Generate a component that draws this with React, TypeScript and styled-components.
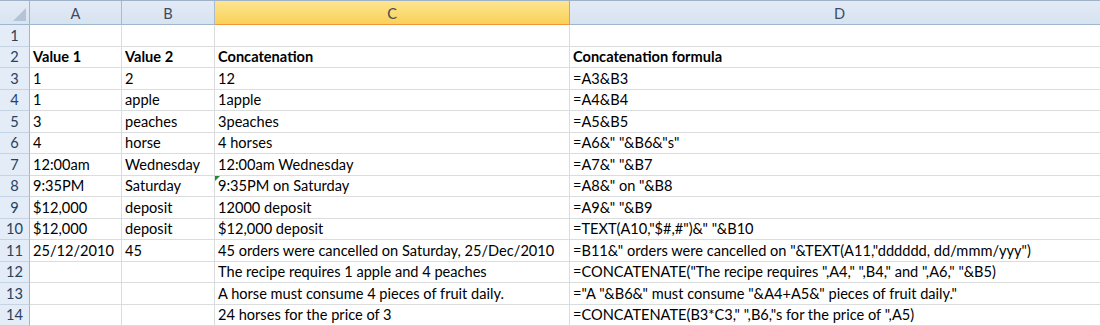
import React from "react";
import styled, { createGlobalStyle } from "styled-components";

const Global = createGlobalStyle`
  html, body { margin: 0; padding: 0; background: #ffffff; overflow: hidden; }
  #root { width: 1100px; height: 326px; overflow: hidden; }
`;

const FONT = `"Lato", "Liberation Sans", sans-serif`;

const Sheet = styled.div`
  display: grid;
  grid-template-columns: 30px 92px 93px 355px 540px;
  grid-auto-rows: auto;
  width: 1110px;
  font-family: ${FONT};
  font-size: 14.6px;
  color: #000;
  box-sizing: border-box;
  border-top: 1px solid #9fb2c7;
`;

const Corner = styled.div`
  position: relative;
  height: 23px;
  background: linear-gradient(#e3ebf6, #d9e4f1);
  border-right: 1px solid #9eb6ce;
  border-bottom: 1px solid #9eb6ce;
  box-sizing: border-box;
  height: 24px;
  &::after {
    content: "";
    position: absolute;
    right: 3px;
    bottom: 3px;
    width: 0;
    height: 0;
    border-style: solid;
    border-width: 0 0 13px 13px;
    border-color: transparent transparent #b4c4d6 transparent;
  }
`;

const ColHead = styled.div<{ $selected?: boolean }>`
  height: 24px;
  box-sizing: border-box;
  display: flex;
  align-items: center;
  justify-content: center;
  font-size: 14.6px;
  color: ${(p) => (p.$selected ? "#3d4a58" : "#3b4c63")};
  background: ${(p) =>
    p.$selected
      ? "linear-gradient(#fde58e, #f9d15a)"
      : "linear-gradient(#e2eaf6, #d8e3f0)"};
  border-right: 1px solid ${(p) => (p.$selected ? "#e8a33d" : "#a9bbd0")};
  border-bottom: 1px solid ${(p) => (p.$selected ? "#f29536" : "#9eb6ce")};
  padding-top: 1px;
`;

const RowHead = styled.div<{ $h: number }>`
  height: ${(p) => p.$h}px;
  box-sizing: border-box;
  display: flex;
  align-items: flex-end;
  justify-content: center;
  padding-bottom: 2px;
  background: #e4ecf7;
  color: #27415f;
  font-size: 14.6px;
  border-right: 1px solid #9eb6ce;
  border-bottom: 1px solid #c5d3e3;
`;

const Cell = styled.div<{ $h: number; $bold?: boolean }>`
  position: relative;
  height: ${(p) => p.$h}px;
  box-sizing: border-box;
  display: flex;
  align-items: flex-end;
  padding: 0 3px 2px 3px;
  white-space: nowrap;
  overflow: visible;
  font-weight: ${(p) => (p.$bold ? 700 : 400)};
  border-right: 1px solid #dadcdd;
  border-bottom: 1px solid #dadcdd;
`;

const ErrorMark = styled.span`
  position: absolute;
  left: 0;
  top: 0;
  width: 0;
  height: 0;
  border-style: solid;
  border-width: 5px 5px 0 0;
  border-color: #1e8a34 transparent transparent transparent;
`;

type Row = [string, string, string, string];

const rows: Row[] = [
  ["", "", "", ""],
  ["Value 1", "Value 2", "Concatenation", "Concatenation formula"],
  ["1", "2", "12", "=A3&B3"],
  ["1", "apple", "1apple", "=A4&B4"],
  ["3", "peaches", "3peaches", "=A5&B5"],
  ["4", "horse", "4 horses", '=A6&" "&B6&"s"'],
  ["12:00am", "Wednesday", "12:00am Wednesday", '=A7&" "&B7'],
  ["9:35PM", "Saturday", "9:35PM on Saturday", '=A8&" on "&B8'],
  ["$12,000", "deposit", "12000 deposit", '=A9&" "&B9'],
  ["$12,000", "deposit", "$12,000 deposit", '=TEXT(A10,"$#,#")&" "&B10'],
  [
    "25/12/2010",
    "45",
    "45 orders were cancelled on Saturday, 25/Dec/2010",
    '=B11&" orders were cancelled on "&TEXT(A11,"dddddd, dd/mmm/yyy")',
  ],
  [
    "",
    "",
    "The recipe requires 1 apple and 4 peaches",
    '=CONCATENATE("The recipe requires ",A4," ",B4," and ",A6," "&B5)',
  ],
  [
    "",
    "",
    "A horse must consume 4 pieces of fruit daily.",
    '="A "&B6&" must consume "&A4+A5&" pieces of fruit daily."',
  ],
  [
    "",
    "",
    "24 horses for the price of 3",
    '=CONCATENATE(B3*C3," ",B6,"s for the price of ",A5)',
  ],
];

export default function App() {
  return (
    <>
      <Global />
      <Sheet>
        <Corner />
        <ColHead>A</ColHead>
        <ColHead>B</ColHead>
        <ColHead $selected>C</ColHead>
        <ColHead>D</ColHead>
        {rows.map((r, i) => {
          const h = i % 2 === 0 ? 22 : 21;
          const bold = i === 1;
          return (
            <React.Fragment key={i}>
              <RowHead $h={h}>{i + 1}</RowHead>
              {r.map((v, j) => (
                <Cell key={j} $h={h} $bold={bold}>
                  {i === 7 && j === 2 && <ErrorMark />}
                  {v}
                </Cell>
              ))}
            </React.Fragment>
          );
        })}
      </Sheet>
    </>
  );
}
